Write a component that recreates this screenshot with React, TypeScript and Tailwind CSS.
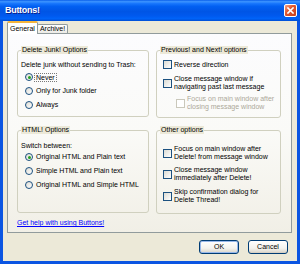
import React from "react"

function Radio({ checked }: { checked?: boolean }) {
  return (
    <span className="flex h-[8px] w-[8px] shrink-0 items-center justify-center rounded-full border border-[#1C5180] bg-[linear-gradient(135deg,#DCDBD3,#FFFFFF)]">
      {checked && <span className="h-[3px] w-[3px] rounded-full bg-[#21A121]" />}
    </span>
  )
}

function Check({ disabled }: { disabled?: boolean }) {
  return (
    <span
      className={
        disabled
          ? "h-[9px] w-[9px] shrink-0 border border-[#CAC8BB] bg-white"
          : "h-[9px] w-[9px] shrink-0 border border-[#1C5180] bg-[linear-gradient(135deg,#DCDBD3,#FFFFFF)]"
      }
    />
  )
}

function Group({ title, className, children }: { title: string; className: string; children: React.ReactNode }) {
  return (
    <fieldset className={"rounded-[3px] border border-[#D0D0BF] " + className}>
      <legend className="ml-[3px] bg-[#ECE9D8] px-[1px] leading-[8px]">{title}</legend>
      {children}
    </fieldset>
  )
}

function RadioRow({ label, checked, focused }: { label: string; checked?: boolean; focused?: boolean }) {
  return (
    <div className="flex h-[14px] items-center gap-[3px] pl-[7px]">
      <Radio checked={checked} />
      <span
        className={
          focused
            ? "border border-dotted border-[#7A7A7A] px-[1px] leading-[7px] -ml-[2px]"
            : "leading-[8px]"
        }
      >
        {label}
      </span>
    </div>
  )
}

function CheckRow({ lines, disabled, className }: { lines: string[]; disabled?: boolean; className: string }) {
  return (
    <div className={"flex items-center gap-[2px] " + className}>
      <Check disabled={disabled} />
      <span className={disabled ? "leading-[8px] text-[#ACA899]" : "leading-[8px]"}>
        {lines.map((l, i) => (
          <span key={i} className="block">
            {l}
          </span>
        ))}
      </span>
    </div>
  )
}

function Button({ label, isDefault }: { label: string; isDefault?: boolean }) {
  return (
    <button
      className={
        "flex h-[14px] w-[40px] items-center justify-center rounded-[3px] border border-[#003C74] bg-[linear-gradient(180deg,#FFFFFF,#F3F3EE_60%,#D8D3C8)] leading-[8px] " +
        (isDefault ? "shadow-[inset_0_0_0_1px_#98B8EA]" : "shadow-[inset_0_-1px_0_0_#D6D0C5]")
      }
    >
      {label}
    </button>
  )
}

export default function App() {
  return (
    <div className="flex h-[264px] w-[300px] flex-col bg-[#0B55E2] font-['Liberation_Sans',Arial,sans-serif] text-[7px] text-black">
      {/* title bar */}
      <div className="flex h-[21px] shrink-0 items-center justify-between bg-[linear-gradient(180deg,#0A5FEA_0%,#3D95FF_8%,#1A78FD_16%,#0260F2_30%,#0055E5_55%,#0059EE_75%,#0063F8_88%,#004FD6_100%)] pl-[5px] pr-[3px]">
        <span className="text-[9px] font-bold tracking-[-0.3px] text-white [text-shadow:1px_1px_0_#0A1E8C]">Buttons!</span>
        <span className="flex h-[13px] w-[13px] items-center justify-center rounded-[2px] border border-white bg-[linear-gradient(135deg,#F2A58A,#E2582F_40%,#C33F1E)]">
          <svg width="7" height="7" viewBox="0 0 7 7">
            <path d="M1 1L6 6M6 1L1 6" stroke="white" strokeWidth="1.6" strokeLinecap="square" />
          </svg>
        </span>
      </div>

      {/* client area */}
      <div className="mx-[3px] mb-[3px] flex flex-1 flex-col bg-[#ECE9D8] pl-[4px] pr-[5px]">
        {/* tabs */}
        <div className="flex h-[12px] items-end">
          <div className="relative z-10 -mb-px flex h-[13px] items-center rounded-t-[2px] border border-b-0 border-t-2 border-[#919B9C] border-t-[#F5B53C] bg-white px-[2px] leading-[8px]">
            General
          </div>
          <div className="-ml-px flex h-[9px] items-center rounded-t-[2px] border border-b-0 border-[#919B9C] bg-[linear-gradient(180deg,#FFFFFF,#ECEBE6)] px-[2px] leading-[8px]">
            Archive!
          </div>
        </div>

        {/* tab panel */}
        <div className="flex h-[200px] flex-col border border-[#919B9C] bg-[linear-gradient(180deg,#FCFCFE_0%,#FAFAF7_50%,#F1EFE6_100%)] pl-[9px] pt-[12px]">
          <div className="grid grid-cols-[132px_125px] grid-rows-[71px_88px] gap-x-[7px] gap-y-[9px]">
            <Group title="Delete Junk! Options" className="h-[71px]">
              <div className="mt-[7px] pl-[3px] leading-[8px]">Delete junk without sending to Trash:</div>
              <div className="mt-[1px]">
                <RadioRow label="Never" checked focused />
                <RadioRow label="Only for Junk folder" />
                <RadioRow label="Always" />
              </div>
            </Group>

            <Group title="Previous! and Next! options" className="h-[72px]">
              <CheckRow className="mt-[6px] pl-[6px]" lines={["Reverse direction"]} />
              <CheckRow
                className="mt-[6px] pl-[6px]"
                lines={["Close message window if", "navigating past last message"]}
              />
              <CheckRow
                className="mt-[4px] pl-[19px]"
                disabled
                lines={["Focus on main window after", "closing message window"]}
              />
            </Group>

            <Group title="HTML! Options" className="h-[87px]">
              <div className="mt-[8px] pl-[3px] leading-[8px]">Switch between:</div>
              <div>
                <RadioRow label="Original HTML and Plain text" checked />
                <RadioRow label="Simple HTML and Plain text" />
                <RadioRow label="Original HTML and Simple HTML" />
              </div>
            </Group>

            <Group title="Other options" className="h-[88px]">
              <CheckRow
                className="mt-[11px] pl-[6px]"
                lines={["Focus on main window after", "Delete! from message window"]}
              />
              <CheckRow
                className="mt-[5px] pl-[6px]"
                lines={["Close message window", "immediately after Delete!"]}
              />
              <CheckRow
                className="mt-[6px] pl-[6px]"
                lines={["Skip confirmation dialog for", "Delete Thread!"]}
              />
            </Group>
          </div>

          <a href="#" className="mt-[5px] self-start leading-[8px] text-[#0000FF] underline">
            Get help with using Buttons!
          </a>
        </div>

        {/* dialog buttons */}
        <div className="mt-[7px] flex justify-end gap-[9px] pr-[4px]">
          <Button label="OK" isDefault />
          <Button label="Cancel" />
        </div>
      </div>
    </div>
  )
}
